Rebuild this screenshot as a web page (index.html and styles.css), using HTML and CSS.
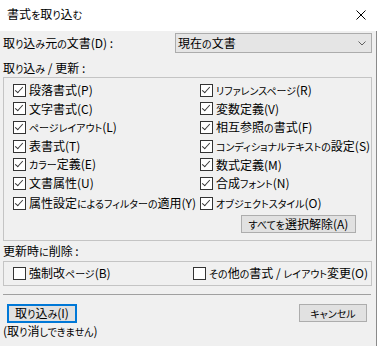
FILE: index.html
```html
<!DOCTYPE html>
<html lang="ja">

<head>
  <meta charset="UTF-8"/>
  <meta name="viewport" content="width=device-width, initial-scale=1.0"/>
  <title>書式を取り込む</title>
  <link rel="stylesheet" href="styles.css">
</head>

<body>
<div class="dialog">
  <header class="titlebar">
    <span class="title">書式<span class="k">を</span>取<span class="k">り</span>込<span class="k">む</span></span>
    <svg class="close" width="10" height="10" viewBox="0 0 10 10"><path d="M0.5 0.5 L9.5 9.5 M9.5 0.5 L0.5 9.5" stroke="#000" stroke-width="1" fill="none"/></svg>
  </header>

  <main class="content">
    <div class="source-row">
      <label>取<span class="k">り</span>込<span class="k">み</span>元<span class="k">の</span>文書(D) :</label>
      <div class="select">
        <span>現在<span class="k">の</span>文書</span>
        <svg width="8" height="5" viewBox="0 0 8 5"><polyline points="0.5,0.5 4,4 7.5,0.5" stroke="#606060" stroke-width="1" fill="none"/></svg>
      </div>
    </div>

    <div class="section-label">取<span class="k">り</span>込<span class="k">み</span> / 更新 :</div>
    <div class="group group-import">
      <div class="check-grid">
        <div class="check"><span class="box on"></span><span>段落書式(P)</span></div>
        <div class="check"><span class="box on"></span><span><span class="k">リファレンスページ</span>(R)</span></div>
        <div class="check"><span class="box on"></span><span>文字書式(C)</span></div>
        <div class="check"><span class="box on"></span><span>変数定義(V)</span></div>
        <div class="check"><span class="box on"></span><span><span class="k">ページレイアウト</span>(L)</span></div>
        <div class="check"><span class="box on"></span><span>相互参照<span class="k">の</span>書式(F)</span></div>
        <div class="check"><span class="box on"></span><span>表書式(T)</span></div>
        <div class="check"><span class="box on"></span><span><span class="k">コンディショナルテキストの</span>設定(S)</span></div>
        <div class="check"><span class="box on"></span><span><span class="k">カラー</span>定義(E)</span></div>
        <div class="check"><span class="box on"></span><span>数式定義(M)</span></div>
        <div class="check"><span class="box on"></span><span>文書属性(U)</span></div>
        <div class="check"><span class="box on"></span><span>合成<span class="k">フォント</span>(N)</span></div>
        <div class="check last"><span class="box on"></span><span>属性設定<span class="k">によるフィルターの</span>適用(Y)</span></div>
        <div class="check last"><span class="box on"></span><span><span class="k">オブジェクトスタイル</span>(O)</span></div>
      </div>
      <div class="group-actions">
        <button class="btn"><span class="k">すべてを</span>選択解除(A)</button>
      </div>
    </div>

    <div class="section-label second">更新時<span class="k">に</span>削除 :</div>
    <div class="group group-delete">
      <div class="check"><span class="box"></span><span>強制改<span class="k">ページ</span>(B)</span></div>
      <div class="check"><span class="box"></span><span><span class="k">その</span>他<span class="k">の</span>書式 / <span class="k">レイアウト</span>変更(O)</span></div>
    </div>

    <div class="separator"></div>

    <div class="footer">
      <button class="btn default">取<span class="k">り</span>込<span class="k">み</span>(I)</button>
      <button class="btn cancel"><span class="k">キャンセル</span></button>
    </div>
    <div class="note">(取<span class="k">り</span>消<span class="k">しできません</span>)</div>
  </main>
</div>
</body>

</html>
```

FILE: styles.css
```css
body {
  margin: 0;
  background: #f0f0f0;
  color: #000;
  font-family: "Noto Sans CJK JP", "Noto Sans", sans-serif;
  font-size: 12px;
  line-height: 16px;
  font-feature-settings: "palt";
}

/* kana are much narrower in the original UI font */
.k {
  font-size: 10px;
}

.dialog {
  width: 377px;
  height: 346px;
  overflow: hidden;
}

.titlebar {
  height: 31px;
  background: #fff;
  display: flex;
  align-items: center;
  justify-content: space-between;
  padding: 0 11px 2px 7px;
  box-sizing: border-box;
}

.content {
  height: 315px;
  padding: 2px 4px 0 3px;
  border-right: 1px solid #8a8a8a;
  box-sizing: border-box;
}

.source-row {
  display: flex;
  align-items: center;
  justify-content: space-between;
  height: 20px;
}

.select {
  width: 197px;
  height: 20px;
  box-sizing: border-box;
  background: #e5e5e5;
  border: 1px solid #acacac;
  display: flex;
  align-items: center;
  justify-content: space-between;
  padding: 0 5px 0 2px;
}

.section-label {
  margin-top: 7px;
  height: 16px;
}

.section-label.second {
  margin-top: 2px;
}

.group {
  margin-top: 1px;
  border: 1px solid #c4c4c4;
  box-sizing: border-box;
}

.group-import {
  padding: 3px 15px 7px 9px;
}

.check-grid {
  display: grid;
  grid-template-columns: 187px 1fr;
  grid-auto-rows: 18.6px;
}

.check {
  display: flex;
  align-items: center;
  gap: 3px;
  white-space: nowrap;
}

.check.last {
  margin-top: 3px;
}

.box {
  width: 13px;
  height: 13px;
  box-sizing: border-box;
  border: 1px solid #333;
  background: #fff;
  flex: none;
  position: relative;
}

.box.on::after {
  content: "";
  position: absolute;
  left: 3px;
  top: 0px;
  width: 3px;
  height: 7px;
  border-right: 1.3px solid #333;
  border-bottom: 1.3px solid #333;
  transform: rotate(42deg);
}

.group-actions {
  display: flex;
  justify-content: flex-end;
  margin-top: 4px;
}

.btn {
  font: inherit;
  color: #000;
  background: #e1e1e1;
  border: 1px solid #adadad;
  height: 18px;
  padding: 0 4px;
  line-height: 14px;
  white-space: nowrap;
  box-sizing: border-box;
}

.group-actions .btn {
  width: 115px;
}

.group-delete {
  margin-top: 2px;
  height: 25px;
  padding: 0 0 0 9px;
  display: grid;
  grid-template-columns: 180px 1fr;
  align-items: center;
}

.separator {
  margin-top: 8px;
  height: 1px;
  background: #a0a0a0;
  margin-right: 1px;
}

.footer {
  margin-top: 9px;
  display: flex;
  justify-content: space-between;
  padding: 0 5px 0 4px;
}

.btn.default {
  width: 70px;
  height: 19px;
  border: 2px solid #0078d7;
}

.btn.cancel {
  width: 68px;
}

.note {
  height: 16px;
}
```
